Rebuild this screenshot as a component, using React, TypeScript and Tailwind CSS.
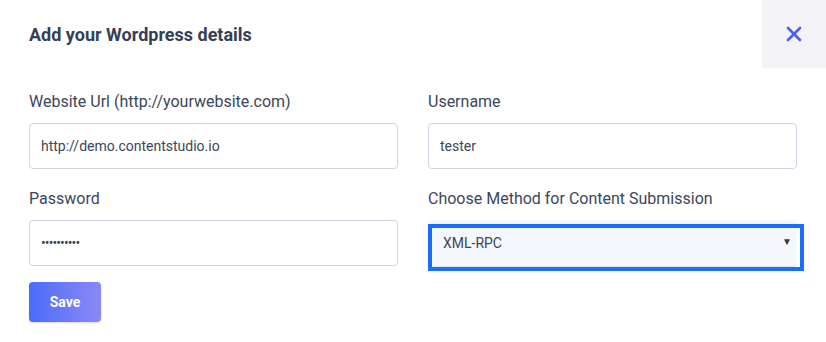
import { useState } from "react";

function CloseIcon() {
  return (
    <svg width={16} height={16} viewBox="0 0 16 16" fill="none">
      <path
        d="M2 2L14 14M14 2L2 14"
        stroke="#4a5ff7"
        strokeWidth={2.6}
        strokeLinecap="round"
      />
    </svg>
  );
}

function Field({
  label,
  children,
}: {
  label: string;
  children: React.ReactNode;
}) {
  return (
    <div className="flex flex-col gap-[10px]">
      <label className="text-[16px] leading-[22px] text-[#3c4659]">{label}</label>
      {children}
    </div>
  );
}

const inputClass =
  "h-[46px] w-full rounded-[4px] border border-[#d4d3e2] bg-white px-[11px] text-[14px] text-[#3c4659] outline-none";

export default function App() {
  const [method, setMethod] = useState("xmlrpc");

  return (
    <div
      className="w-[826px] h-[342px] bg-white"
      style={{ fontFamily: "Roboto, 'Liberation Sans', sans-serif" }}
    >
      {/* Header */}
      <div className="flex h-[68px] items-center justify-between">
        <h2 className="pl-[29px] text-[18px] font-bold text-[#363f54]">
          Add your Wordpress details
        </h2>
        <button
          aria-label="Close"
          className="flex h-[68px] w-[64px] items-center justify-center bg-[#f2f2f7]"
        >
          <CloseIcon />
        </button>
      </div>

      {/* Form */}
      <div className="grid grid-cols-2 gap-x-[30px] gap-y-[19px] px-[29px] pt-[23px]">
        <Field label="Website Url (http://yourwebsite.com)">
          <input
            className={inputClass}
            readOnly
            defaultValue="http://demo.contentstudio.io"
          />
        </Field>
        <Field label="Username">
          <input className={inputClass} readOnly defaultValue="tester" />
        </Field>
        <Field label="Password">
          <input
            type="password"
            className={`${inputClass} text-[11px] tracking-[-0.9px]`}
            readOnly
            defaultValue="1234567890"
          />
        </Field>
        <Field label="Choose Method for Content Submission">
          <div className="relative">
            <select
              value={method}
              onChange={(e) => setMethod(e.target.value)}
              className="h-[46px] w-full appearance-none rounded-[4px] bg-[#f4f7fb] px-[15px] text-[14px] text-[#3c4659] outline-none shadow-[0_1px_1px_rgba(0,0,0,0.12)]"
            >
              <option value="xmlrpc">XML-RPC</option>
              <option value="rest">REST API</option>
            </select>
            {/* focus ring */}
            <div className="pointer-events-none absolute left-0 top-[4px] h-[47px] w-[376px] border-[4px] border-[#1a6ef7]" />
            <span className="pointer-events-none absolute right-[5px] top-[14px] text-[10px] text-[#333c4c]">
              ▼
            </span>
          </div>
        </Field>
      </div>

      <div className="px-[29px] pt-[16px]">
        <button className="h-[40px] w-[72px] rounded-[4px] bg-gradient-to-r from-[#4a6bfb] to-[#8c88f4] text-[14px] font-bold text-white shadow-[0_1px_2px_rgba(0,0,0,0.15)]">
          Save
        </button>
      </div>
    </div>
  );
}
